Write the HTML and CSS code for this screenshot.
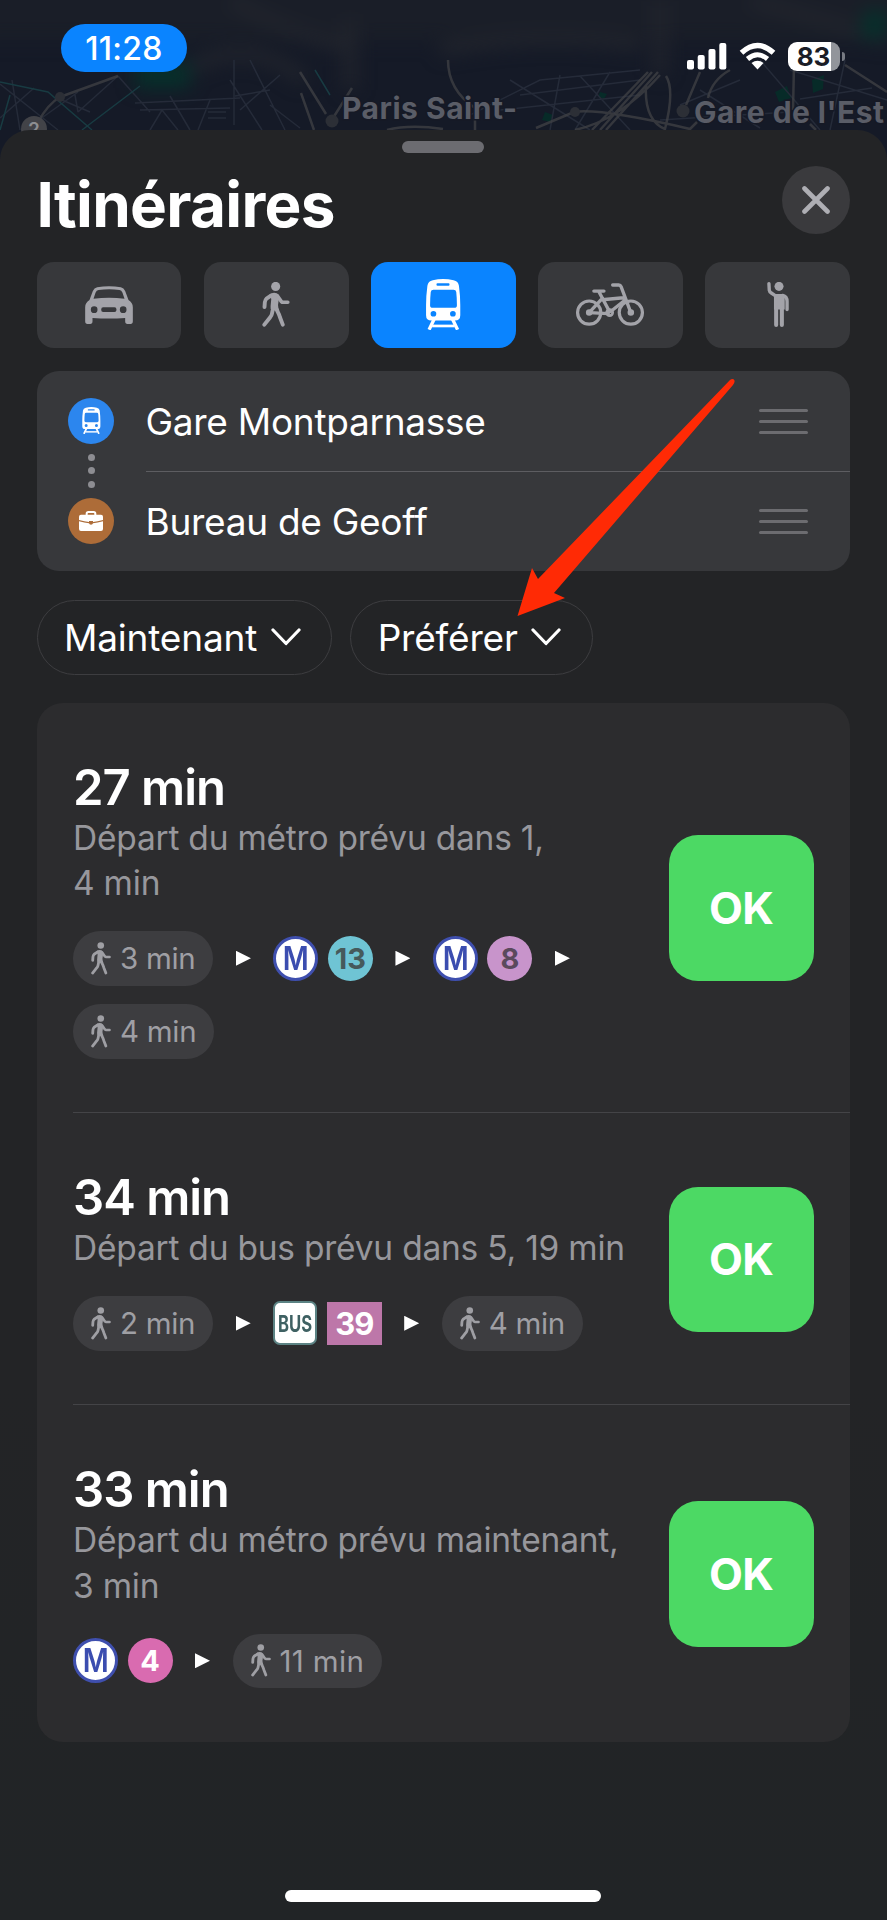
FILE: index.html
```html
<!DOCTYPE html>
<html lang="fr">
<head>
    <meta charset="UTF-8">
    <meta name="viewport" content="width=device-width, initial-scale=1.0">
    <title>Itinéraires</title>
    <link rel="stylesheet" href="styles.css">
</head>
<body>
<!-- Shared icons -->
<svg class="icons" width="0" height="0">
    <symbol id="walk" viewBox="0 0 82 133">
        <circle cx="40" cy="13" r="13.500" fill="currentColor"/>
        <path d="M22 37Q31 29 43 33Q51 36 50 46L47 68Q47 76 51 84L28 84Q24 80 25 72L27 50Z" fill="currentColor"/>
        <g fill="none" stroke="currentColor" stroke-width="11.500" stroke-linecap="round" stroke-linejoin="round">
            <path d="M26 40L13 49Q9 53 8 60L7 74"/>
            <path d="M46 42L57 58Q59 60 62 60H76" stroke-width="10.500"/>
            <path d="M40 76L49 94Q51 99 53 105L61 126"/>
            <path d="M31 84L29 94Q28 100 24 104L6.500 126"/>
        </g>
    </symbol>
    <symbol id="train" viewBox="0 0 104 152">
        <path fill="currentColor" fill-rule="evenodd" d="M20 4Q51 -4 82 4Q96 7 98 20Q102 50 102 78V108Q102 124 86 124H16Q0 124 0 108V78Q0 50 4 20Q6 7 20 4ZM34 13Q31 13 31 16.500Q31 20 34 20H67Q70 20 70 16.500Q70 13 67 13ZM22 32Q15 32 14 39Q12 58 12 78Q12 86 20 86H84Q92 86 92 78Q92 58 90 39Q89 32 82 32ZM22 95A8.500 8.500 0 1 0 22 112A8.500 8.500 0 1 0 22 95ZM80 95A8.500 8.500 0 1 0 80 112A8.500 8.500 0 1 0 80 95Z"/>
        <path fill="none" stroke="currentColor" stroke-width="10" d="M24 120L9 151M79 120L94 151"/>
        <path fill="none" stroke="currentColor" stroke-width="8" d="M18 140H85"/>
    </symbol>
</svg>

<!-- Map strip behind the status bar -->
<svg class="map" width="887" height="170" viewBox="0 0 887 170">
    <defs>
        <filter id="soft" x="-20%" y="-40%" width="140%" height="180%" color-interpolation-filters="sRGB"><feGaussianBlur stdDeviation="9"/></filter>
    </defs>
    <rect width="887" height="170" fill="#151a27"/>
    <g filter="url(#soft)">
        <path fill="#1a1e28" d="M-20 -20H907V40H-20Z"/>
        <path fill="none" stroke="#22252d" stroke-width="12" d="M190 68Q250 35 305 80M230 0Q300 40 350 45M350 20V90M660 0V75M440 50Q540 30 640 45M750 0L887 40"/>
        <path fill="#06302b" d="M135 62H190V88H135ZM865 10H887V38H860Z"/>
    </g>
    <path fill="#043029" d="M545 112l8 3-3 7-8-2zM600 92l7 2-3 5-6-2zM775 92l12-6 4 12-12 4zM812 80l12-5-1 14-10 4z" opacity=".8"/>
    <g fill="none" stroke="#252b39" stroke-width="1.500">
        <path d="M0 84L58 130M12 80L20 130M34 88L0 118M55 97L90 112M75 95L78 112M78 112L118 76M135 103L240 98M140 110L230 108M118 76L150 112M170 96L190 130M210 100L198 130M208 112H226M208 118H226M230 80L262 130M234 60V125M235 96L270 90M270 105L300 128M240 110L280 75M150 130L162 110L178 130M25 130L78 92M250 60L285 130"/>
        <path d="M470 115L540 80L640 70M500 110L640 95M560 75L550 130M510 80L590 130M580 76L630 130M680 105L740 80M700 90L760 128M790 70L887 100M800 99L872 88M760 60L820 130M845 60L830 130M660 120L790 112M520 95L640 80M575 130L610 72"/>
    </g>
    <path fill="none" stroke="#183b42" stroke-width="1.500" d="M0 82L48 92L92 130M82 130L140 86M0 130L10 95M315 70L330 95"/>
    <g fill="none" stroke="#404146" stroke-width="2.500">
        <path d="M38 122Q48 104 60 97L118 76M301 93L314 130M300 72L326 114M333 118L352 88M387 130Q410 124 443 129M448 60Q448 90 475 108V130M536 128L574 112Q600 108 690 129L697 122M575 130Q620 120 660 75M592 130L648 72M600 130L652 72M606 130L658 72M646 85Q644 120 665 129Q675 90 666 76M686 105L700 72M708 98Q712 80 730 70M794 65L793 110M810 124L816 130M845 65L887 92" opacity=".75"/>
    </g>
    <g fill="#2c2f36">
        <circle cx="60" cy="97" r="5"/><circle cx="332" cy="121" r="6.500"/><circle cx="683" cy="111" r="6.500"/><circle cx="575" cy="112" r="5"/>
    </g>
    <circle cx="34" cy="129" r="13" fill="#424348"/>
    <text class="map-badge" x="34" y="136" text-anchor="middle">2</text>
    <text class="map-label" x="342" y="118.500" textLength="175">Paris Saint-</text>
    <text class="map-label" x="694" y="122.500" textLength="190">Gare de l'Est</text>
</svg>

<header class="status-bar">
    <div class="time">11:28</div>
    <div class="status-icons">
        <svg width="40" height="27" viewBox="0 0 40 27" fill="#fff">
            <rect x="0" y="17" width="7" height="9.500" rx="2"/>
            <rect x="10.700" y="12" width="7" height="14.500" rx="2"/>
            <rect x="21.500" y="6" width="7" height="20.500" rx="2"/>
            <rect x="32.300" y="0" width="7" height="26.500" rx="2"/>
        </svg>
        <svg width="37" height="28" viewBox="0 0 37 28">
            <path d="M2.500 10.800Q18.500 -3.800 34.500 10.800" fill="none" stroke="#fff" stroke-width="5.400"/>
            <path d="M8.500 17Q18.500 8.500 28.500 17" fill="none" stroke="#fff" stroke-width="5"/>
            <path d="M12.500 21Q18.500 16.500 24.500 21L18.500 27.500Z" fill="#fff"/>
        </svg>
        <div class="battery"><span class="battery-level">83</span></div>
    </div>
</header>

<main class="sheet">
    <div class="grabber"></div>
    <div class="title-row">
        <h1>Itinéraires</h1>
        <button class="close">
            <svg width="28" height="28" viewBox="0 0 28 28"><path d="M2.500 2.500L25.500 25.500M25.500 2.500L2.500 25.500" stroke="#aeaeb4" stroke-width="4.600" stroke-linecap="round"/></svg>
        </button>
    </div>

    <nav class="modes">
        <button class="mode">
            <svg width="48" height="38" viewBox="0 0 143 114">
                <path fill="currentColor" fill-rule="evenodd" d="M36 4Q72 -3 107 4Q116 6 120 15L130 42Q143 50 143 64V106Q143 114 136 114H127Q120 114 120 106V96Q72 99 22 96V106Q22 114 15 114H7Q0 114 0 106V64Q0 50 13 42L23 15Q27 6 36 4ZM40 12Q34 13 31 20L25 38Q72 33 118 38L112 20Q109 13 103 12Q72 8 40 12ZM27 61A10 10 0 1 0 27 81A10 10 0 1 0 27 61ZM114 61A10 10 0 1 0 114 81A10 10 0 1 0 114 61ZM54 64Q48 64 48 71Q48 78 54 78H88Q94 78 94 71Q94 64 88 64Z"/>
            </svg>
        </button>
        <button class="mode"><svg width="28" height="45"><use href="#walk"/></svg></button>
        <button class="mode active"><svg width="35" height="51"><use href="#train"/></svg></button>
        <button class="mode">
            <svg width="68" height="43" viewBox="0 0 202 128" fill="none" stroke="currentColor" stroke-width="9.500" stroke-linecap="round" stroke-linejoin="round">
                <circle cx="39" cy="88" r="34.500"/>
                <circle cx="163" cy="88" r="34.500"/>
                <path d="M109 6H127Q132 6 134 11L163 88M53 24H83M68 26L100 86M78 50L141 44M147 50L104 84M39 88L76 48M39 88L96 91" stroke-width="10"/>
                <circle cx="100" cy="88" r="9" stroke-width="8"/>
                <circle cx="39" cy="88" r="5" fill="currentColor"/>
                <circle cx="163" cy="88" r="5" fill="currentColor"/>
            </svg>
        </button>
        <button class="mode">
            <svg width="22" height="45" viewBox="0 0 64 134">
                <circle cx="35" cy="13" r="13.500" fill="currentColor"/>
                <path d="M20 36H46Q52 37 52 44V82H20Z" fill="currentColor"/>
                <g fill="none" stroke="currentColor" stroke-linecap="round" stroke-linejoin="round">
                    <path d="M5 5L6 24Q7 29 11 32L26 42" stroke-width="10"/>
                    <path d="M46 40Q59 43 59 58V82" stroke-width="10"/>
                    <path d="M26.500 76V128M43.500 76V128" stroke-width="12"/>
                </g>
            </svg>
        </button>
    </nav>

    <section class="stops">
        <div class="stops-icons">
            <span class="stop-icon station"><svg width="19" height="27"><use href="#train"/></svg></span>
            <span class="dots"><i></i><i></i><i></i></span>
            <span class="stop-icon work">
                <svg width="24" height="20" viewBox="0 0 72 60">
                    <path d="M23 14V8Q23 3 28 3H44Q49 3 49 8V14" fill="none" stroke="#fff" stroke-width="6"/>
                    <path d="M6 11H66Q72 11 72 17V27Q55 32 42 33V30H30V33Q17 32 0 27V17Q0 11 6 11Z" fill="#fff"/>
                    <path d="M0 31Q17 36 30 37Q31 41 36 41Q41 41 42 37Q55 36 72 31V54Q72 60 66 60H6Q0 60 0 54Z" fill="#fff"/>
                </svg>
            </span>
        </div>
        <div class="stops-list">
            <div class="stop">Gare Montparnasse <span class="drag"><i></i><i></i><i></i></span></div>
            <div class="stop">Bureau de Geoff <span class="drag"><i></i><i></i><i></i></span></div>
        </div>
    </section>

    <div class="filters">
        <button class="filter">
            <span>Maintenant</span>
            <svg width="30" height="18" viewBox="0 0 30 18"><path d="M2 2L15 15.500L28 2" fill="none" stroke="#fff" stroke-width="3.200" stroke-linecap="round" stroke-linejoin="round"/></svg>
        </button>
        <button class="filter">
            <span>Préférer</span>
            <svg width="30" height="18" viewBox="0 0 30 18"><path d="M2 2L15 15.500L28 2" fill="none" stroke="#fff" stroke-width="3.200" stroke-linecap="round" stroke-linejoin="round"/></svg>
        </button>
    </div>

    <section class="routes">
        <article class="route">
            <div class="route-info">
                <h2>27 min</h2>
                <p>Départ du métro prévu dans 1,<br>4 min</p>
                <div class="steps">
                    <span class="walk"><svg width="20" height="33"><use href="#walk"/></svg>3 min</span>
                    <span class="next"></span>
                    <span class="line"><b class="metro"><span>M</span></b><b class="number l13">13</b></span>
                    <span class="next"></span>
                    <span class="line"><b class="metro"><span>M</span></b><b class="number l8">8</b></span>
                    <span class="next"></span>
                    <span class="walk"><svg width="20" height="33"><use href="#walk"/></svg>4 min</span>
                </div>
            </div>
            <button class="go">OK</button>
        </article>
        <article class="route">
            <div class="route-info">
                <h2>34 min</h2>
                <p>Départ du bus prévu dans 5, 19 min</p>
                <div class="steps">
                    <span class="walk"><svg width="20" height="33"><use href="#walk"/></svg>2 min</span>
                    <span class="next"></span>
                    <span class="line"><b class="bus"><span>BUS</span></b><b class="bus-number">39</b></span>
                    <span class="next"></span>
                    <span class="walk"><svg width="20" height="33"><use href="#walk"/></svg>4 min</span>
                </div>
            </div>
            <button class="go">OK</button>
        </article>
        <article class="route">
            <div class="route-info">
                <h2>33 min</h2>
                <p>Départ du métro prévu maintenant,<br>3 min</p>
                <div class="steps">
                    <span class="line"><b class="metro"><span>M</span></b><b class="number l4">4</b></span>
                    <span class="next"></span>
                    <span class="walk long"><svg width="20" height="33"><use href="#walk"/></svg>11 min</span>
                </div>
            </div>
            <button class="go">OK</button>
        </article>
    </section>

    <div class="home-bar"></div>
</main>

<!-- Red arrow pointing at the filter -->
<svg class="arrow" width="240" height="260" viewBox="505 370 240 260">
    <path d="M730 380Q733 378 734.500 380.500Q735 382 733 385L554 593L565 598L517.500 616L532 568L538 579Z" fill="#ff2a05"/>
</svg>
</body>
</html>
```

FILE: styles.css
```css
/* General Styles */
* {
    box-sizing: border-box;
}

body {
    font-family: Inter, "Liberation Sans", sans-serif;
    background-color: #151a27;
    color: #fff;
    margin: 0;
    width: 887px;
    height: 1920px;
    position: relative;
    overflow: hidden;
}

button {
    font-family: inherit;
    color: inherit;
    border: none;
    padding: 0;
    display: flex;
    align-items: center;
    justify-content: center;
}

.icons {
    position: absolute;
}

/* Map */
.map {
    position: absolute;
    top: 0;
    left: 0;
}

.map-label {
    font-size: 30px;
    font-weight: 700;
    fill: #5a5d67;
    stroke: #151925;
    stroke-width: 3px;
    paint-order: stroke;
}

.map-badge {
    font-size: 19px;
    font-weight: 600;
    fill: #8d8e91;
}

/* Status bar */
.status-bar {
    position: relative;
    height: 129.500px;
    padding: 24px 42px 0 61px;
    display: flex;
    justify-content: space-between;
    align-items: flex-start;
}

.time {
    width: 126px;
    height: 48px;
    border-radius: 24px;
    background-color: #0a84ff;
    font-size: 32px;
    font-weight: 450;
    letter-spacing: 0.300px;
    line-height: 49px;
    text-align: center;
}

.status-icons {
    display: flex;
    align-items: center;
    gap: 12px;
    margin-top: 17.500px;
}

.battery {
    width: 52px;
    height: 29px;
    border-radius: 9px;
    background: linear-gradient(90deg, #fff 43px, #92959b 43px);
    position: relative;
    margin-right: 5px;
}

.battery::after {
    content: "";
    position: absolute;
    left: 54px;
    top: 10px;
    width: 3px;
    height: 9px;
    border-radius: 0 4px 4px 0;
    background-color: #777b83;
}

.battery-level {
    display: block;
    width: 51px;
    text-align: center;
    font-size: 26px;
    font-weight: 700;
    line-height: 29px;
    color: #1a1d27;
}

/* Sheet */
.sheet {
    position: relative;
    height: 1790.500px;
    padding: 11.500px 37px 0 36.500px;
    background: linear-gradient(#232426, #232426 70%, #212426);
    border-radius: 30px 30px 0 0;
}

.grabber {
    width: 82px;
    height: 12px;
    margin: 0 auto;
    border-radius: 6px;
    background-color: #6c6c71;
}

.title-row {
    display: flex;
    justify-content: space-between;
    margin-top: 13px;
    height: 95.500px;
}

h1 {
    margin: 4px 0 0 0;
    font-size: 62px;
    font-weight: 700;
    line-height: 70px;
    letter-spacing: -0.700px;
}

.close {
    width: 68px;
    height: 68px;
    border-radius: 50%;
    background-color: #3a3a3d;
}

/* Travel modes */
.modes {
    display: grid;
    grid-template-columns: repeat(5, 1fr);
    gap: 22.300px;
}

.mode {
    height: 86px;
    border-radius: 17px;
    background-color: #37383b;
    color: #a3a3a9;
}

.mode.active {
    background-color: #0a84ff;
    color: #fff;
}

/* From / to */
.stops {
    display: flex;
    margin-top: 23px;
    height: 200px;
    border-radius: 22px;
    background-color: #37383b;
}

.stops-icons {
    width: 109px;
    padding-top: 27px;
    display: flex;
    flex-direction: column;
    align-items: center;
}

.stop-icon {
    width: 46px;
    height: 46px;
    border-radius: 50%;
    display: flex;
    align-items: center;
    justify-content: center;
}

.station {
    background-color: #2c86ee;
}

.work {
    background-color: #ad6c38;
}

.dots {
    height: 54px;
    display: flex;
    flex-direction: column;
    align-items: center;
    justify-content: center;
    gap: 6.500px;
}

.dots i {
    width: 7px;
    height: 7px;
    border-radius: 50%;
    background-color: #8d8d92;
}

.stops-list {
    flex: 1;
}

.stop {
    height: 100px;
    display: flex;
    align-items: center;
    justify-content: space-between;
    padding-top: 2px;
    padding-right: 42px;
    font-size: 37px;
    letter-spacing: -0.280px;
}

.stop + .stop {
    padding-top: 0;
    border-top: 1px solid #5d5d61;
}

.drag {
    width: 49px;
    display: flex;
    flex-direction: column;
    gap: 8px;
}

.drag i {
    height: 3px;
    border-radius: 1.500px;
    background-color: #6c6c70;
}

/* Filters */
.filters {
    display: flex;
    gap: 18px;
    margin-top: 29px;
}

.filter {
    height: 75px;
    padding: 0 30.500px 0 26.500px;
    gap: 13.500px;
    border: 1.500px solid #3d3d40;
    border-radius: 38px;
    background: none;
    font-size: 37px;
    letter-spacing: -0.180px;
}

/* Routes */
.routes {
    margin-top: 28px;
    border-radius: 26px;
    background-color: #2c2c2e;
}

.route {
    margin-left: 36.500px;
    padding: 57px 36px 53.500px 0;
    display: flex;
    align-items: center;
    justify-content: space-between;
}

.route + .route {
    border-top: 1px solid #444447;
}

.route-info {
    width: 560px;
}

h2 {
    margin: 0;
    font-size: 49px;
    font-weight: 600;
    line-height: 56px;
    letter-spacing: -1px;
}

p {
    margin: 0;
    font-size: 33.500px;
    line-height: 45.500px;
    letter-spacing: -0.220px;
    color: #97979c;
    white-space: nowrap;
}

.steps {
    display: flex;
    flex-wrap: wrap;
    align-items: center;
    gap: 18.500px 22.500px;
    margin-top: 24.500px;
}

.walk {
    height: 54.500px;
    padding: 0 18px;
    border-radius: 27.500px;
    background-color: #3d3d40;
    color: #9f9fa4;
    font-size: 29.500px;
    letter-spacing: -0.300px;
    display: flex;
    align-items: center;
    gap: 9px;
}

.walk.long {
    letter-spacing: 0.350px;
}

.next {
    width: 15px;
    height: 15px;
    background-color: #fff;
    clip-path: polygon(0 0, 100% 50%, 0 100%);
}

.line {
    display: flex;
    align-items: center;
    gap: 9.500px;
}

.metro,
.number {
    width: 45px;
    height: 45px;
    border-radius: 50%;
    display: flex;
    align-items: center;
    justify-content: center;
}

.metro {
    border: 3.500px solid #3f4fae;
    background-color: #fff;
    color: #3b4db0;
    font-size: 32px;
    font-weight: 600;
}

.metro span {
    transform: scaleX(0.880);
}

.number {
    font-size: 29px;
    font-weight: 700;
}

.l13 {
    background-color: #6fc4d4;
    color: #465a5c;
}

.l8 {
    background-color: #c894cb;
    color: #5b4a5d;
}

.l4 {
    background-color: #d96bb0;
}

.bus {
    width: 44px;
    height: 44px;
    border: 2px solid #5c8384;
    border-radius: 7px;
    background-color: #fff;
    color: #3f6163;
    font-size: 22.500px;
    display: flex;
    align-items: center;
    justify-content: center;
}

.bus span {
    transform: scaleX(0.740);
}

.bus-number {
    width: 55px;
    height: 43px;
    background-color: #bd77a9;
    font-size: 31px;
    font-weight: 700;
    letter-spacing: -1px;
    line-height: 43px;
    text-align: center;
}

.go {
    width: 145.500px;
    height: 145.500px;
    margin-top: -2px;
    border-radius: 29px;
    background-color: #4cd964;
    font-size: 44px;
    font-weight: 700;
    letter-spacing: -0.500px;
}

.home-bar {
    width: 316px;
    height: 12px;
    margin: 148px auto 0;
    border-radius: 6px;
    background-color: #fff;
}

/* Arrow */
.arrow {
    position: absolute;
    left: 505px;
    top: 370px;
}
```
